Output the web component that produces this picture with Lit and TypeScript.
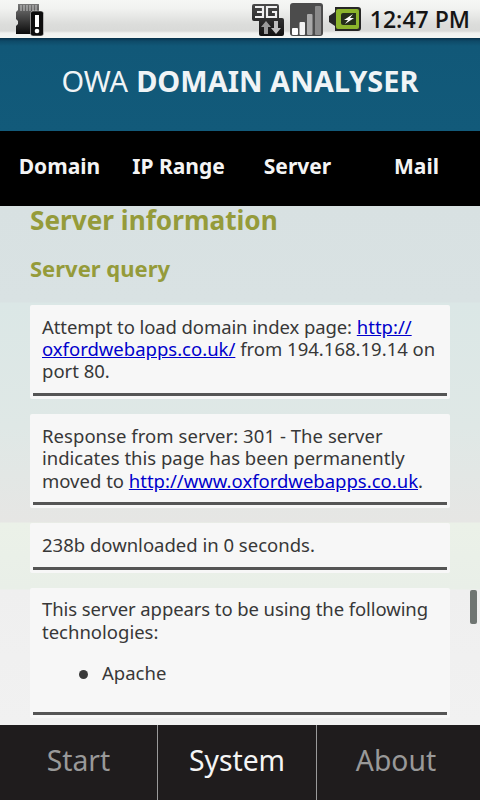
import { LitElement, html, css } from "lit";
import { customElement } from "lit/decorators.js";

@customElement("app-root")
export class AppRoot extends LitElement {
  static styles = css`
    :host {
      display: flex;
      flex-direction: column;
      width: 480px;
      height: 800px;
      overflow: hidden;
      font-family: "Noto Sans", "Open Sans", sans-serif;
      position: relative;
    }
    .status {
      height: 38px;
      flex: none;
      background: linear-gradient(#f6f7f5 0, #f2f3f1 8px, #dcdddb 24px, #d9dad8 31px, #f0f1ef 33px, #f3f6f3 38px);
      display: flex;
      align-items: center;
      padding: 0 10px 0 14px;
      color: #111;
    }
    .status svg { display: block; flex: none; }
    .spacer { flex: 1; }
    .time {
      font-family: "Open Sans", sans-serif;
      font-weight: 600;
      font-size: 23px;
      margin-left: 9px;
      color: #151515;
    }
    .title {
      height: 93px;
      flex: none;
      box-sizing: border-box;
      padding-bottom: 8px;
      background: linear-gradient(#07304a 0, #0e4a68 3px, #115878 8px, #125a7a 100%);
      color: #f0f4f6;
      display: flex;
      align-items: center;
      justify-content: center;
      font-size: 29px;
    }
    .title span { font-weight: 400; }
    .title b { font-weight: 700; margin-left: 8px; }
    .tabs {
      height: 75px;
      flex: none;
      box-sizing: border-box;
      padding-bottom: 6px;
      background: #000;
      display: grid;
      grid-template-columns: 119px 119px 119px 119px;
      align-items: center;
      justify-items: center;
      color: #f4f4f4;
      font-weight: 700;
      font-size: 21px;
    }
    .content {
      flex: 1;
      min-height: 0;
      overflow: hidden;
      position: relative;
      background: linear-gradient(#d8e1e2 0, #d9e2e3 96px, #dbe7e6 97px, #dfe8e6 220px, #e6e6e4 316px, #ebf1e8 317px, #e9efe8 383px, #efefef 384px, #f1f1f1 100%);
      padding: 0 30px;
      color: #383838;
      font-size: 18.5px;
      line-height: 22.4px;
    }
    h1 {
      margin: 0;
      font-size: 26.2px;
      line-height: 28px;
      color: #959b3a;
      font-weight: 700;
    }
    h2 {
      margin: 19px 0 22px;
      font-size: 22px;
      line-height: 30px;
      color: #959b3a;
      font-weight: 700;
    }
    .card {
      background: #f7f7f7;
      margin-bottom: 15px;
      padding: 10.5px 3px 3px;
      border-radius: 2px;
    }
    .card p { margin: 0; padding: 0 9px; }
    .card hr {
      border: 0;
      height: 3px;
      background: #555;
      margin: 10.5px 0 0;
    }
    .card hr.tall { margin-top: 27px; }
    .tight { letter-spacing: -0.09px; }
    .loose { letter-spacing: 0.05px; }
    a { color: #0000cc; text-decoration: underline; }
    ul {
      margin: 19px 0 0;
      padding: 0 0 0 46px;
      list-style: none;
      display: flex;
      align-items: center;
      gap: 14px;
    }
    .dot { width: 9px; height: 9px; border-radius: 50%; background: #3a3a3a; margin-top: 3px; flex: none; }
    .thumb {
      position: absolute;
      right: 3px;
      top: 384px;
      width: 7px;
      height: 34px;
      border-radius: 2px;
      background: #6f7572;
    }
    .bottom {
      height: 75px;
      flex: none;
      background: #1f1c1d;
      display: grid;
      grid-template-columns: 158px 159px 1fr;
      font-size: 28.3px;
      color: #999;
    }
    .bottom div {
      display: flex;
      align-items: center;
      justify-content: center;
      border-right: 1px solid #9a9a9a;
      box-sizing: border-box;
      padding-bottom: 5px;
    }
    .bottom div:last-child { border-right: 0; padding-right: 5px; }
    .bottom .on { color: #f5f5f5; }
  `;

  render() {
    return html`
      <div class="status">
        <svg width="30" height="34" viewBox="0 0 30 34">
          <defs>
            <linearGradient id="sd" x1="0" y1="0" x2="0" y2="1">
              <stop offset="0" stop-color="#777" /><stop offset="1" stop-color="#0a0a0a" />
            </linearGradient>
          </defs>
          <path d="M4 2h21v30H2v-8l2-2v-3l-2-2V10l2-2z" fill="url(#sd)" />
          <path d="M7 3v6M10 3v6M13 3v6M16 3v6M19 3v6M22 3v6" stroke="#c8c8c8" stroke-width="1" />
          <rect x="16.5" y="9" width="13" height="25" rx="2.500" fill="#0d0d0d" stroke="#eee" stroke-width=".5" />
          <rect x="21" y="13" width="4" height="12" fill="#fff" />
          <circle cx="23" cy="29" r="2.300" fill="#fff" />
        </svg>
        <div class="spacer"></div>
        <svg width="32" height="33" viewBox="0 0 32 33">
          <defs>
            <linearGradient id="tg" x1="0" y1="0" x2="0" y2="1">
              <stop offset="0" stop-color="#4a4a4a" /><stop offset="1" stop-color="#111" />
            </linearGradient>
          </defs>
          <path d="M2 1h23a2 2 0 0 1 2 2v12h3a2 2 0 0 1 2 2v14a2 2 0 0 1-2 2H9a2 2 0 0 1-2-2V18H2a2 2 0 0 1-2-2V3a2 2 0 0 1 2-2z" fill="url(#tg)" />
          <path d="M3 4h8v10H3M5 9h6" fill="none" stroke="#f0f0f0" stroke-width="2.200" />
          <path d="M25 4H15v10h9V9h-4" fill="none" stroke="#f0f0f0" stroke-width="2.200" />
          <path d="M12 31v-7H9l5-6 5 6h-3v7z" fill="#9a9a9a" />
          <path d="M22 18v7h-3l5 6 5-6h-3v-7z" fill="#c0c0c0" />
        </svg>
        <svg style="margin-left:6px" width="33" height="33" viewBox="0 0 33 33">
          <rect width="33" height="33" rx="3" fill="#4c4c4c" />
          <rect x="2" y="25" width="6" height="7" rx="1" fill="#fff" />
          <rect x="9.500" y="19" width="5.500" height="13" rx="1" fill="#f2f2f2" />
          <rect x="17" y="11" width="5.500" height="21" rx="1" fill="#a9a9a9" />
          <rect x="25" y="3" width="6" height="29" rx="1" fill="#8a8a8a" />
        </svg>
        <svg style="margin-left:6px" width="32" height="26" viewBox="0 0 32 26">
          <path d="M0 10l6-4V1h23a3 3 0 0 1 3 3v18a3 3 0 0 1-3 3H6v-5l-6-4z" fill="#262626" />
          <rect x="7" y="3" width="23" height="20" rx="2" fill="#8cb52c" />
          <path d="M27 7H14a2 2 0 0 0-2 2v8a2 2 0 0 0 2 2h13z" fill="#26301a" />
          <path d="M24 8l-9 6h4l-3 4 9-6h-4z" fill="#fff" />
        </svg>
        <span class="time">12:47 PM</span>
      </div>
      <div class="title"><span>OWA</span><b>DOMAIN ANALYSER</b></div>
      <div class="tabs">
        <span>Domain</span><span>IP Range</span><span>Server</span><span>Mail</span>
      </div>
      <div class="content">
        <h1>Server information</h1>
        <h2>Server query</h2>
        <div class="card">
          <p><span class="tight">Attempt to load domain index page:</span> <a href="#">http://<br />oxfordwebapps.co.uk/</a> from 194.168.19.14 on port 80.</p>
          <hr />
        </div>
        <div class="card">
          <p><span class="loose">Response from server: 301 - The server</span> indicates this page has been permanently moved to <a href="#">http://www.oxfordwebapps.co.uk</a>.</p>
          <hr />
        </div>
        <div class="card">
          <p>238b downloaded in 0 seconds.</p>
          <hr />
        </div>
        <div class="card">
          <p><span class="tight">This server appears to be using the following</span> technologies:</p>
          <ul><span class="dot"></span><li>Apache</li></ul>
          <hr class="tall" />
        </div>
        <div class="thumb"></div>
      </div>
      <div class="bottom">
        <div>Start</div><div class="on">System</div><div>About</div>
      </div>
    `;
  }
}
